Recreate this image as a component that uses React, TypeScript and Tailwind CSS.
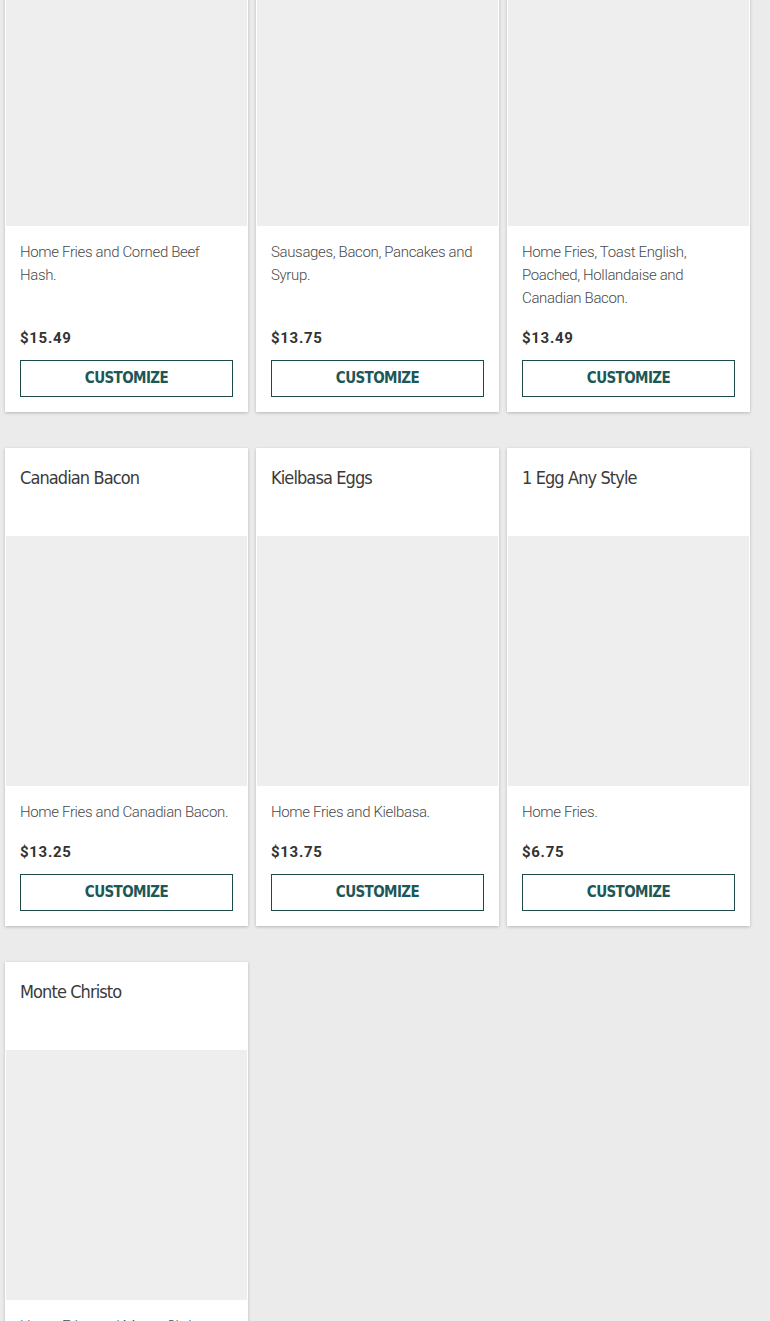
import React from 'react';

interface MenuItem {
    key: React.Key;
    title: string;
    description: string;
    price: string;
}

const items: MenuItem[] = [
    { key: '1', title: '', description: 'Home Fries and Corned Beef Hash.', price: '$15.49' },
    { key: '2', title: '', description: 'Sausages, Bacon, Pancakes and Syrup.', price: '$13.75' },
    { key: '3', title: '', description: 'Home Fries, Toast English, Poached, Hollandaise and Canadian Bacon.', price: '$13.49' },
    { key: '4', title: 'Canadian Bacon', description: 'Home Fries and Canadian Bacon.', price: '$13.25' },
    { key: '5', title: 'Kielbasa Eggs', description: 'Home Fries and Kielbasa.', price: '$13.75' },
    { key: '6', title: '1 Egg Any Style', description: 'Home Fries.', price: '$6.75' },
    { key: '7', title: 'Monte Christo', description: 'Home Fries and Monte Christo Sandwich.', price: '$12.99' },
];

const condensed = { fontFamily: "'DejaVu Sans Condensed', sans-serif" };

const MenuCard: React.FC<{ item: MenuItem }> = ({ item }) => (
    <div className="flex flex-col bg-white shadow-[0_1px_3px_rgba(0,0,0,0.22)]">
        <div className="h-[88px] px-[15px] pt-[16px]">
            <h3 className="text-[18px] leading-[28px] tracking-[-0.9px] text-[#3a3a3a]" style={condensed}>
                {item.title}
            </h3>
        </div>
        <div className="mx-[1px] h-[250px] bg-[#eeeeee]" />
        <div className="flex flex-1 flex-col px-[15px] pt-[15px] pb-[15px]">
            <p
                className="flex-1 text-[15px] font-light leading-[23px] text-[#4a4a4a]"
                style={{ fontFamily: 'Roboto, sans-serif', letterSpacing: '-0.35px' }}
            >
                {item.description}
            </p>
            <div
                className="mt-[18px] text-[15px] font-bold leading-[20px] tracking-[0.7px] text-[#333333]"
                style={{ fontFamily: 'Roboto, sans-serif' }}
            >
                {item.price}
            </div>
            <button
                className="mt-[12px] h-[37px] w-full border border-[#1f4a4a] text-[15px] font-bold tracking-[-0.6px] text-[#1d5757]"
                style={condensed}
            >
                CUSTOMIZE
            </button>
        </div>
    </div>
);

export default function App() {
    return (
        <div className="h-[1321px] overflow-hidden bg-[#ebebeb]">
            <div className="mt-[-112px] grid w-[750px] grid-cols-3 gap-x-[8px] gap-y-[36px] pl-[5px]">
                {items.map((it) => (
                    <MenuCard key={it.key} item={it} />
                ))}
            </div>
        </div>
    );
}
